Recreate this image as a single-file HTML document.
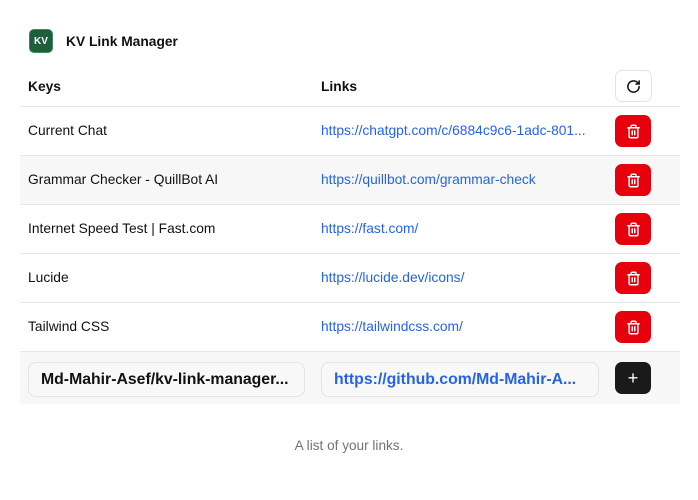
<!DOCTYPE html>
<html><head><style>
*{box-sizing:border-box;margin:0;padding:0}
body{width:698px;height:500px;background:#fff;font-family:"Liberation Sans",sans-serif;color:#111;font-size:13.8px;position:relative;overflow:hidden}
.logo{position:absolute;left:29px;top:29px;width:24px;height:24px;border-radius:5px;background:#1d5e3b;border:1px solid #3e8a5d;color:#fff;font-size:10px;font-weight:bold;display:flex;align-items:center;justify-content:center}
.title{position:absolute;left:66px;top:34px;font-size:13.8px;font-weight:bold}
.row{position:absolute;left:20px;width:660px;border-bottom:1px solid #e8e8e8}
.k{position:absolute;left:8px}
.l{position:absolute;left:301px;color:#2563eb}
.del{position:absolute;left:595px;width:36px;height:32px;border-radius:7px;background:#e7000b;display:flex;align-items:center;justify-content:center}
.inp{position:absolute;top:10px;height:35px;border:1px solid #e3e3e3;border-radius:8px;background:#f8f8f8;font-size:15.8px;font-weight:bold;padding:8px 12px;white-space:nowrap;overflow:hidden}
</style></head><body>
<div class="logo">KV</div>
<div class="title">KV Link Manager</div>
<div class="row" style="top:66px;height:41px;font-weight:bold">
<span class="k" style="top:13px">Keys</span><span class="l" style="top:13px;color:#111">Links</span>
<div style="position:absolute;left:595px;top:4px;width:37px;height:32px;border:1px solid #e3e3e3;border-radius:7px;display:flex;align-items:center;justify-content:center">
<svg width="15" height="15" viewBox="0 0 24 24" fill="none" stroke="#111" stroke-width="2.4" stroke-linecap="round" stroke-linejoin="round"><path d="M21 12a9 9 0 1 1-9-9c2.5 0 4.9 1 6.7 2.7L21 8"/><path d="M21 3v5h-5"/></svg></div>
</div>
<div class="row" style="top:107px;height:49px"><span class="k" style="top:16px">Current Chat</span><span class="l" style="top:16px">https://chatgpt.com/c/6884c9c6-1adc-801...</span><div class="del" style="top:8px"><svg width="15" height="15" viewBox="0 0 24 24" fill="none" stroke="#fff" stroke-width="2.4" stroke-linecap="round"><path d="M3 6h18M19 6v14a2 2 0 0 1-2 2H7a2 2 0 0 1-2-2V6M8 6V4a2 2 0 0 1 2-2h4a2 2 0 0 1 2 2v2M10 11v6M14 11v6"/></svg></div></div>
<div class="row" style="top:156px;height:49px;background:#f7f7f7"><span class="k" style="top:16px">Grammar Checker - QuillBot AI</span><span class="l" style="top:16px">https://quillbot.com/grammar-check</span><div class="del" style="top:8px"><svg width="15" height="15" viewBox="0 0 24 24" fill="none" stroke="#fff" stroke-width="2.4" stroke-linecap="round"><path d="M3 6h18M19 6v14a2 2 0 0 1-2 2H7a2 2 0 0 1-2-2V6M8 6V4a2 2 0 0 1 2-2h4a2 2 0 0 1 2 2v2M10 11v6M14 11v6"/></svg></div></div>
<div class="row" style="top:205px;height:49px"><span class="k" style="top:16px">Internet Speed Test | Fast.com</span><span class="l" style="top:16px">https://fast.com/</span><div class="del" style="top:8px"><svg width="15" height="15" viewBox="0 0 24 24" fill="none" stroke="#fff" stroke-width="2.4" stroke-linecap="round"><path d="M3 6h18M19 6v14a2 2 0 0 1-2 2H7a2 2 0 0 1-2-2V6M8 6V4a2 2 0 0 1 2-2h4a2 2 0 0 1 2 2v2M10 11v6M14 11v6"/></svg></div></div>
<div class="row" style="top:254px;height:49px"><span class="k" style="top:16px">Lucide</span><span class="l" style="top:16px">https://lucide.dev/icons/</span><div class="del" style="top:8px"><svg width="15" height="15" viewBox="0 0 24 24" fill="none" stroke="#fff" stroke-width="2.4" stroke-linecap="round"><path d="M3 6h18M19 6v14a2 2 0 0 1-2 2H7a2 2 0 0 1-2-2V6M8 6V4a2 2 0 0 1 2-2h4a2 2 0 0 1 2 2v2M10 11v6M14 11v6"/></svg></div></div>
<div class="row" style="top:303px;height:49px"><span class="k" style="top:16px">Tailwind CSS</span><span class="l" style="top:16px">https://tailwindcss.com/</span><div class="del" style="top:8px"><svg width="15" height="15" viewBox="0 0 24 24" fill="none" stroke="#fff" stroke-width="2.4" stroke-linecap="round"><path d="M3 6h18M19 6v14a2 2 0 0 1-2 2H7a2 2 0 0 1-2-2V6M8 6V4a2 2 0 0 1 2-2h4a2 2 0 0 1 2 2v2M10 11v6M14 11v6"/></svg></div></div>
<div class="row" style="top:352px;height:52px;background:#f7f7f7;border:none">
<div class="inp" style="left:8px;width:277px">Md-Mahir-Asef/kv-link-manager...</div>
<div class="inp" style="left:301px;width:278px;color:#2563eb">https://github.com/Md-Mahir-A...</div>
<div style="position:absolute;left:595px;top:10px;width:36px;height:32px;border-radius:7px;background:#1a1a1a;color:#fff;font-size:18px;display:flex;align-items:center;justify-content:center">+</div>
</div>
<div style="position:absolute;left:0;width:698px;top:438px;text-align:center;color:#737373;font-size:13.6px">A list of your links.</div>
</body></html>
